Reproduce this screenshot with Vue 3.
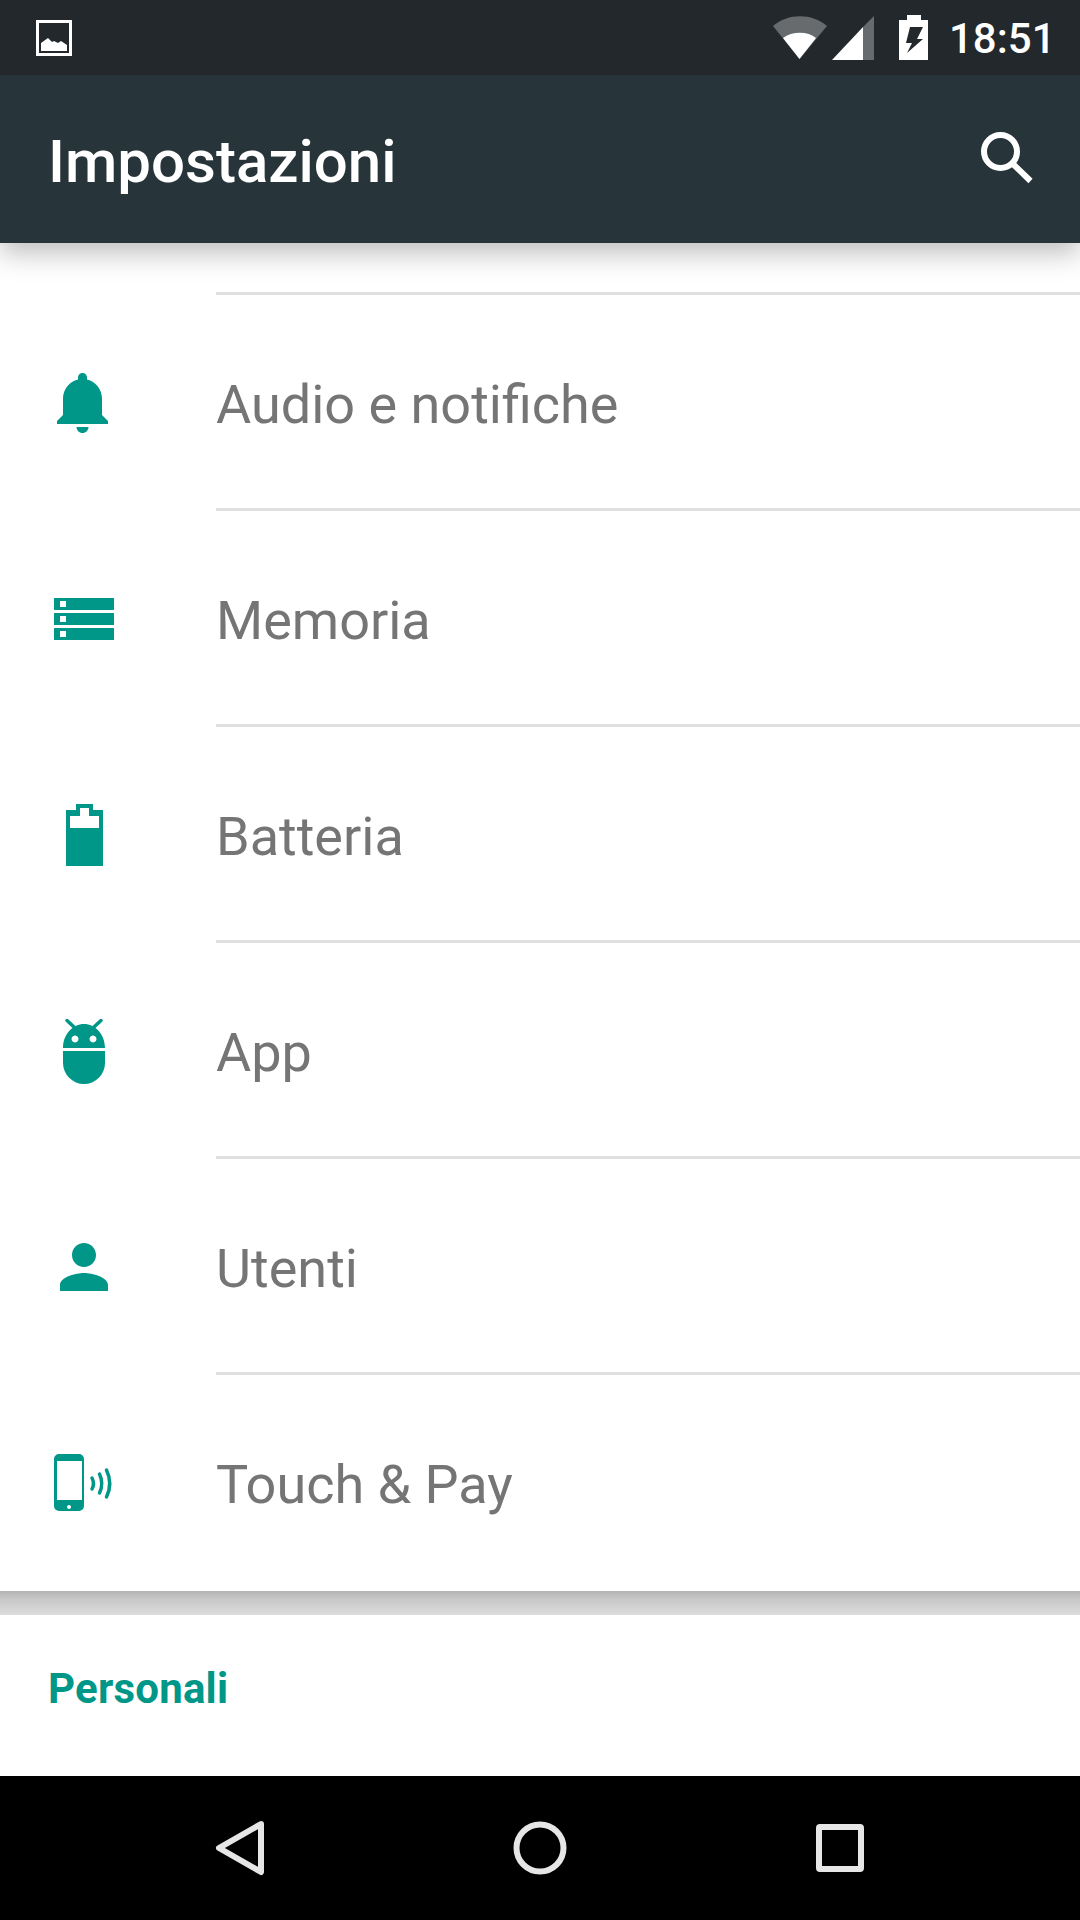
<script setup>
const rows = [
  {
    label: 'Audio e notifiche',
    shapes: [
      { d: 'M34.5 67c3.3 0 6-2.7 6-6h-12c0 3.3 2.7 6 6 6zM54 49V32.5c0-9.2-6.4-16.9-15-19V11.500c0-2.500-2-4.500-4.500-4.500S30 9 30 11.500v2c-8.600 2.100-15 9.800-15 19V49l-6 6v3h51v-3l-6-6z' }
    ]
  },
  {
    label: 'Memoria',
    shapes: [
      { d: 'M6 16h60v12H6zM12 19v6h6v-6zM6 31h60v12H6zM12 34v6h6v-6zM6 46h60v12H6zM12 49v6h6v-6z' }
    ]
  },
  {
    label: 'Batteria',
    shapes: [
      { d: 'M28 6h17v6h10v56H18V12h10zM32 10v8H22v12h29V18H41v-8z' }
    ]
  },
  {
    label: 'App',
    shapes: [
      { d: 'M15 34C15 20 25 10 36 10S57 20 57 34zM27 21.500a3.500 3.500 0 1 0 .01 0zM45 21.500a3.500 3.500 0 1 0 .01 0z' },
      { d: 'M15 37h42v12a21 21 0 0 1-42 0z' },
      { d: 'M19 6.500l7 6.500M53 6.500l-7 6.500', line: true }
    ]
  },
  {
    label: 'Utenti',
    shapes: [
      { d: 'M36 37c6.630 0 12-5.370 12-12s-5.370-12-12-12-12 5.370-12 12 5.370 12 12 12zm0 6c-8 0-24 4-24 12v6h48v-6c0-8-16-12-24-12z' }
    ]
  },
  {
    label: 'Touch & Pay',
    shapes: [
      { d: 'M11 8h20a5 5 0 0 1 5 5v47a5 5 0 0 1-5 5H11a5 5 0 0 1-5-5V13a5 5 0 0 1 5-5zM9 15v39h25V15zM21 59a2 2 0 1 0 .01 0z' },
      { d: 'M44 32Q47 37.500 44 43M51.500 28Q56 37.500 51.500 47M58.500 24Q65 37.500 58.500 51', line: true }
    ]
  }
]
</script>

<template>
  <div class="screen">
    <header class="status">
      <svg class="notice" viewBox="0 0 36 36" width="36" height="36">
        <path class="ink" fill-rule="evenodd" d="M0 0h36v36H0zM3 3v30h30V3z" />
        <path class="ink" d="M5 31V23l7-5 4 4 2-1 4 2 3-2 6 4v6z" />
      </svg>
      <svg class="wifi" viewBox="0 0 54 44" width="54" height="44">
        <path class="dim" d="M0 10C15-3 39-3 54 10L26.500 43z" />
        <path class="ink" d="M10 22C19 15 35 15 43 22L26.500 43z" />
      </svg>
      <svg class="signal" viewBox="0 0 42 44" width="42" height="44">
        <path class="dim" d="M42 0v44H31V11z" />
        <path class="ink" d="M31 11v33H0z" />
      </svg>
      <svg class="charge" viewBox="0 0 29 45" width="29" height="45">
        <path class="ink" d="M8 0h14v5h7v40H0V5h8z" />
        <path class="cut" d="M11 12h13l-6 12h6L8 38l5-10H7z" />
      </svg>
      <span class="time">18:51</span>
    </header>

    <div class="toolbar">
      <h1 class="title">Impostazioni</h1>
      <svg class="search" viewBox="0 0 54 54" width="54" height="54">
        <circle cx="20.500" cy="20.500" r="16.500" />
        <path d="M32.500 32.500L50.500 50" />
      </svg>
    </div>

    <main class="list">
      <div class="lead"></div>
      <div v-for="row in rows" :key="row.label" class="row">
        <svg class="icon" viewBox="0 0 72 72" width="72" height="72">
          <path
            v-for="shape in row.shapes"
            :key="shape.d"
            :class="shape.line ? 'line' : 'solid'"
            :d="shape.d"
          />
        </svg>
        <span class="label">{{ row.label }}</span>
      </div>
    </main>

    <div class="band"></div>

    <section class="section">
      <h2 class="heading">Personali</h2>
    </section>

    <nav class="nav">
      <svg class="back" viewBox="0 0 50 56" width="50" height="56">
        <path d="M46 4L4 28l42 24z" />
      </svg>
      <svg class="home" viewBox="0 0 54 54" width="54" height="54">
        <circle cx="27" cy="27" r="23.500" />
      </svg>
      <svg class="recent" viewBox="0 0 48 48" width="48" height="48">
        <rect x="3" y="3" width="42" height="42" rx="1" />
      </svg>
    </nav>
  </div>
</template>

<style scoped>
.screen {
  width: 1080px;
  height: 1920px;
  display: flex;
  flex-direction: column;
  overflow: hidden;
  background: #fff;
  font-family: Roboto, sans-serif;
}

.status {
  height: 75px;
  flex: none;
  position: relative;
  z-index: 3;
  display: flex;
  align-items: flex-start;
  background: #22282b;
}

.notice {
  margin: 20px 0 0 36px;
}

.wifi {
  margin: 16px 0 0 701px;
}

.signal {
  margin: 16px 0 0 5px;
}

.charge {
  margin: 15px 0 0 25px;
}

.time {
  margin: 16px 0 0 21px;
  font-size: 42px;
  line-height: 46px;
  font-weight: 500;
  color: #fff;
}

.ink {
  fill: #fff;
}

.dim {
  fill: #686b6d;
}

.cut {
  fill: #22282b;
}

.toolbar {
  height: 168px;
  flex: none;
  position: relative;
  z-index: 2;
  display: flex;
  align-items: center;
  justify-content: space-between;
  padding: 0 46px 0 48px;
  background: #27343a;
  box-shadow: 0 10px 26px rgba(0, 0, 0, 0.26);
}

.title {
  margin: 5px 0 0;
  font-size: 60px;
  line-height: 70px;
  font-weight: 500;
  color: #fff;
}

.search {
  margin-top: -2px;
  fill: none;
  stroke: #fff;
  stroke-width: 6;
}

.list {
  flex: none;
}

.lead {
  height: 49px;
  margin-left: 216px;
  border-bottom: 3px solid #e0e0e0;
}

.row {
  height: 216px;
  box-sizing: border-box;
  display: flex;
  align-items: center;
  gap: 96px;
  padding: 1px 0 3px 48px;
  position: relative;
}

.row:not(:last-child)::after {
  content: "";
  position: absolute;
  left: 216px;
  right: 0;
  bottom: 0;
  height: 3px;
  background: #e0e0e0;
}

.icon {
  flex: none;
}

.solid {
  fill: #009688;
  fill-rule: evenodd;
}

.line {
  fill: none;
  stroke: #009688;
  stroke-width: 3.500;
  stroke-linecap: round;
}

.label {
  margin-top: 6px;
  font-size: 54px;
  line-height: 64px;
  color: #757575;
}

.band {
  height: 24px;
  flex: none;
  background: linear-gradient(#b4b4b4, #c6c6c6 30%, #dcdcdc);
}

.section {
  height: 161px;
  flex: none;
  box-sizing: border-box;
  padding: 49px 0 0 48px;
}

.heading {
  margin: 0;
  font-size: 42px;
  line-height: 50px;
  font-weight: 700;
  letter-spacing: 0.2px;
  color: #009688;
}

.nav {
  flex: 1;
  position: relative;
  background: #000;
  display: flex;
  align-items: flex-start;
}

.nav svg {
  fill: none;
  stroke: #e6e6e6;
  stroke-width: 6;
  stroke-linejoin: round;
}

.back {
  margin: 44px 0 0 215px;
}

.home {
  margin: 45px 0 0 248px;
}

.recent {
  margin: 48px 0 0 249px;
}
</style>
